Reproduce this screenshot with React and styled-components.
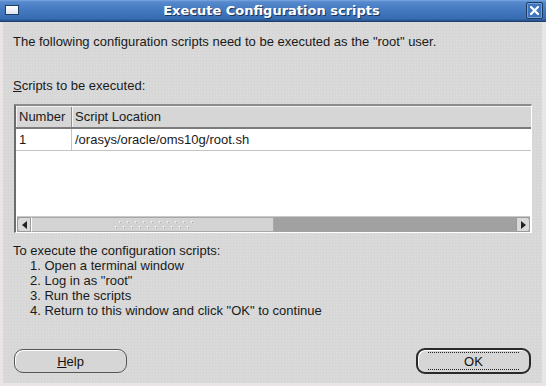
import React from 'react';
import styled, { createGlobalStyle } from 'styled-components';

const Global = createGlobalStyle`
  html, body { margin: 0; padding: 0; background: #e8e4e4; }
  body { font-family: "Liberation Sans", Arial, sans-serif; }
`;

const Window = styled.div`
  width: 546px;
  height: 386px;
  box-sizing: border-box;
  background: #e9e5e5;
  display: flex;
  flex-direction: column;
  overflow: hidden;
`;

const TitleBar = styled.div`
  height: 21px;
  flex: none;
  position: relative;
  display: flex;
  align-items: center;
  justify-content: center;
  background: linear-gradient(#79a6df 0, #5589cc 2px, #4479c0 10px, #366cb0 19px, #2a5794 20px);
  border-bottom: 1px solid #1f3f6c;
`;

const WinIcon = styled.div`
  position: absolute;
  left: 5px;
  top: 5px;
  width: 12px;
  height: 8px;
  border: 1px solid #1d3d6a;
  background: linear-gradient(#ffffff, #dfe6ef);
`;

const Title = styled.span`
  font-family: "DejaVu Sans", sans-serif;
  font-weight: bold;
  font-size: 13px;
  color: #ffffff;
  text-shadow: 1px 1px 0 #1a355c;
  margin-right: 3px;
`;

const CloseBtn = styled.div`
  position: absolute;
  right: 3px;
  top: 2px;
  width: 17px;
  height: 17px;
  box-sizing: border-box;
  border: 1px solid #1c3a64;
  border-radius: 2px;
  box-shadow: inset 0 0 0 1px #74a0d8;
  background: #3f75bb;
  display: flex;
  align-items: center;
  justify-content: center;
`;

const Body = styled.div`
  flex: 1;
  margin: 0 4px 3px 3px;
  background-color: #d5d6d5;
  background-image: radial-gradient(circle at 1px 1px, rgba(255,255,255,0.25) 0.6px, transparent 0.8px);
  background-size: 3px 3px;
  display: flex;
  flex-direction: column;
  padding: 0 10px 0 10px;
  font-size: 13px;
  color: #1a1a1a;
`;

const Text = styled.div`
  line-height: 15px;
  margin-top: ${p => p.$top || 0}px;
  padding-left: ${p => p.$indent || 0}px;
  white-space: nowrap;
`;

const Mnemonic = styled.span`
  text-decoration: underline;
`;

const Table = styled.div`
  margin: 11px 0 0 1px;
  height: 129px;
  box-sizing: border-box;
  border-top: 2px solid #8c8c8c;
  border-left: 2px solid #6c6c6c;
  border-right: 1px solid #ffffff;
  border-bottom: 1px solid #ffffff;
  background: #ffffff;
  display: flex;
  flex-direction: column;
`;

const HeaderRow = styled.div`
  display: flex;
  height: 20px;
  flex: none;
  background: #d5d6d5;
  border-top: 1px solid #f4f4f4;
  border-bottom: 2px solid #7c7c7c;
`;

const HeadCell = styled.div`
  width: ${p => (p.$w ? `${p.$w}px` : 'auto')};
  flex: ${p => (p.$w ? 'none' : 1)};
  box-sizing: border-box;
  padding-left: 2px;
  line-height: 20px;
  border-right: ${p => (p.$w ? '1px solid #8e8e8e' : 'none')};
  border-left: 1px solid #f4f4f4;
`;

const Row = styled.div`
  display: flex;
  height: 21px;
  flex: none;
  border-bottom: 1px solid #c4c4c4;
`;

const Cell = styled.div`
  width: ${p => (p.$w ? `${p.$w}px` : 'auto')};
  flex: ${p => (p.$w ? 'none' : 1)};
  box-sizing: border-box;
  padding-left: 3px;
  line-height: 21px;
  border-right: ${p => (p.$w ? '1px solid #c4c4c4' : 'none')};
`;

const Empty = styled.div`
  flex: 1;
`;

const ScrollBar = styled.div`
  height: 16px;
  flex: none;
  margin: 0 1px 0 1px;
  display: flex;
  background: #a1a1a1;
  border-top: 1px solid #c9c9c9;
  box-sizing: border-box;
`;

const Arrow = styled.div`
  width: 14px;
  flex: none;
  background: #d9d9d9;
  border: 1px solid #9a9a9a;
  border-radius: ${p => (p.$right ? '0 3px 3px 0' : '3px 0 0 3px')};
  box-sizing: border-box;
  display: flex;
  align-items: center;
  justify-content: center;
`;

const Thumb = styled.div`
  width: 243px;
  flex: none;
  background: #d2d3d2;
  border: 1px solid #a9a9a9;
  border-left: 1px solid #ffffff;
  box-sizing: border-box;
  display: flex;
  align-items: center;
  justify-content: center;
  padding-left: 8px;
`;

const Track = styled.div`
  flex: 1;
`;

const Buttons = styled.div`
  display: flex;
  justify-content: space-between;
  align-items: center;
  margin-top: 30px;
  padding: 0 1px 0 1px;
  height: 26px;
`;

const Button = styled.div`
  width: ${p => p.$w}px;
  height: ${p => (p.$default ? 26 : 24)}px;
  box-sizing: border-box;
  border-radius: 9px;
  border: ${p => (p.$default ? '2px solid #2a2a2a' : '1px solid #555')};
  box-shadow: inset 1px 1px 0 #ffffff;
  background: #d5d6d5;
  display: flex;
  align-items: center;
  justify-content: center;
  font-size: 13px;
  color: #111;
  position: relative;
`;

const Focus = styled.div`
  position: absolute;
  left: 10px;
  right: 10px;
  top: 2px;
  bottom: 2px;
  border-top: 1px dotted #222;
  border-bottom: 1px dotted #222;
`;

function Grip() {
  const dots = [];
  for (let i = 0; i < 10; i++) {
    dots.push(<rect key={'a' + i} x={4 + i * 8} y={1} width={1.6} height={1.6} fill="#f6f6f6" />);
    dots.push(<rect key={'b' + i} x={i * 8} y={6} width={1.6} height={1.6} fill="#f6f6f6" />);
    dots.push(<rect key={'c' + i} x={4 + i * 8 + 1} y={2} width={1} height={1} fill="#9c9c9c" />);
    dots.push(<rect key={'d' + i} x={i * 8 + 1} y={7} width={1} height={1} fill="#9c9c9c" />);
  }
  return (
    <svg width="84" height="9" viewBox="0 0 84 9">
      {dots}
    </svg>
  );
}

export default function App() {
  return (
    <Window>
      <Global />
      <TitleBar>
        <WinIcon />
        <Title>Execute Configuration scripts</Title>
        <CloseBtn>
          <svg width="9" height="9" viewBox="0 0 9 9">
            <path d="M1 1 L8 8 M8 1 L1 8" stroke="#ffffff" strokeWidth="2.2" strokeLinecap="square" />
          </svg>
        </CloseBtn>
      </TitleBar>
      <Body>
        <Text $top={12}>The following configuration scripts need to be executed as the "root" user.</Text>
        <Text $top={29}><Mnemonic>S</Mnemonic>cripts to be executed:</Text>
        <Table>
          <HeaderRow>
            <HeadCell $w={56}>Number</HeadCell>
            <HeadCell>Script Location</HeadCell>
          </HeaderRow>
          <Row>
            <Cell $w={56}>1</Cell>
            <Cell>/orasys/oracle/oms10g/root.sh</Cell>
          </Row>
          <Empty />
          <ScrollBar>
            <Arrow>
              <svg width="5" height="8" viewBox="0 0 5 8"><path d="M5 0 L0 4 L5 8 Z" fill="#222" /></svg>
            </Arrow>
            <Thumb><Grip /></Thumb>
            <Track />
            <Arrow $right>
              <svg width="5" height="8" viewBox="0 0 5 8"><path d="M0 0 L5 4 L0 8 Z" fill="#222" /></svg>
            </Arrow>
          </ScrollBar>
        </Table>
        <Text $top={10}>To execute the configuration scripts:</Text>
        <Text $indent={17}>1. Open a terminal window</Text>
        <Text $indent={17}>2. Log in as "root"</Text>
        <Text $indent={17}>3. Run the scripts</Text>
        <Text $indent={17}>4. Return to this window and click "OK" to continue</Text>
        <Buttons>
          <Button $w={113}><span><Mnemonic>H</Mnemonic>elp</span></Button>
          <Button $w={115} $default><Focus />OK</Button>
        </Buttons>
      </Body>
    </Window>
  );
}
